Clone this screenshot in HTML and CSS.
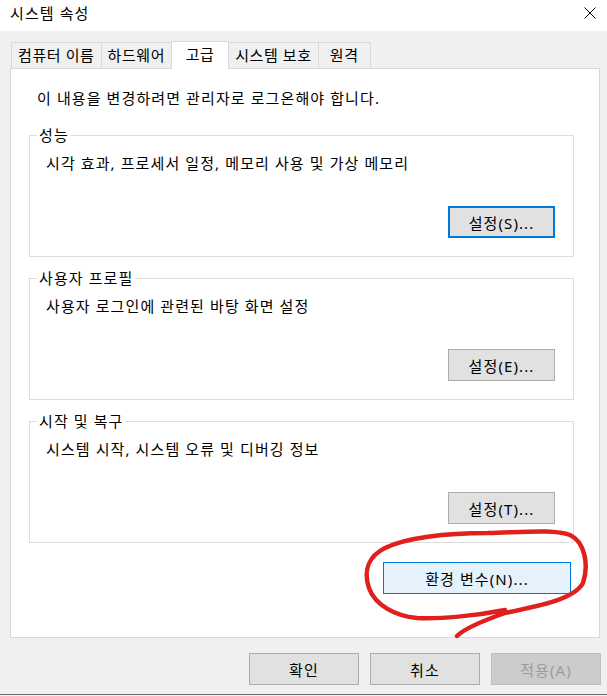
FILE: index.html
```html
<!DOCTYPE html>
<html lang="ko">
<head>
    <meta charset="UTF-8">
    <meta name="viewport" content="width=device-width, initial-scale=1.0">
    <title>시스템 속성</title>
    <link rel="stylesheet" href="styles.css">
</head>
<body>
    <div class="window">
        <div class="titlebar">
            <span class="title">시스템 속성</span>
            <svg class="close" width="12" height="12" viewBox="0 0 12 12">
                <path d="M0.5 0.5 L11.5 11.5 M11.5 0.5 L0.5 11.5" stroke="#000" stroke-width="1" fill="none"/>
            </svg>
        </div>
        <div class="content">
            <div class="tabs">
                <div class="tab">컴퓨터 이름</div>
                <div class="tab">하드웨어</div>
                <div class="tab active">고급</div>
                <div class="tab">시스템 보호</div>
                <div class="tab">원격</div>
            </div>
            <div class="panel">
                <p class="notice">이 내용을 변경하려면 관리자로 로그온해야 합니다.</p>
                <fieldset class="group">
                    <legend>성능</legend>
                    <p class="desc">시각 효과, 프로세서 일정, 메모리 사용 및 가상 메모리</p>
                    <button class="btn btn-default">설정(S)...</button>
                </fieldset>
                <fieldset class="group">
                    <legend>사용자 프로필</legend>
                    <p class="desc">사용자 로그인에 관련된 바탕 화면 설정</p>
                    <button class="btn">설정(E)...</button>
                </fieldset>
                <fieldset class="group">
                    <legend>시작 및 복구</legend>
                    <p class="desc">시스템 시작, 시스템 오류 및 디버깅 정보</p>
                    <button class="btn">설정(T)...</button>
                </fieldset>
                <div class="env-row">
                    <button class="btn btn-hover env-btn">환경 변수(N)...</button>
                </div>
            </div>
            <div class="footer">
                <button class="btn footer-btn">확인</button>
                <button class="btn footer-btn">취소</button>
                <button class="btn footer-btn" disabled>적용(A)</button>
            </div>
        </div>
        <!-- red marker scribble around the env button -->
        <svg class="scribble" width="245" height="120" viewBox="0 0 245 120">
            <path d="M150 90 C120 96, 85 99, 62 98 C40 96, 20 85, 14 68 C8 50, 14 36, 30 28 C50 18, 90 13, 133 13 C170 12, 200 9, 215 15 C230 22, 234 45, 228 63 C220 78, 190 85, 150 93 C130 100, 110 108, 102 116"
                  fill="none" stroke="#e0201c" stroke-width="4.5" stroke-linecap="round" stroke-linejoin="round"/>
        </svg>
    </div>
</body>
</html>
```

FILE: styles.css
```css
body {
    margin: 0;
    background-color: #f0f0f0;
    font-family: "Noto Sans", "Noto Sans CJK KR", sans-serif;
    font-size: 15px;
    letter-spacing: 1.1px;
    color: #000;
}
.window {
    position: relative;
    height: 694px;
    border-bottom: 1px solid #6b6b6b;
    display: flex;
    flex-direction: column;
}
.titlebar {
    height: 31px;
    box-sizing: border-box;
    background-color: #fff;
    display: flex;
    align-items: center;
    justify-content: space-between;
    padding: 0 11px 5px 10px;
}
.title {
    line-height: 20px;
}
.content {
    padding: 10px 6px 0 10px;
}
.tabs {
    display: flex;
    align-items: flex-end;
    height: 27px;
    padding-left: 1px;
}
.tab {
    height: 26px;
    min-width: 53px;
    box-sizing: border-box;
    border: 1px solid #d9d9d9;
    border-bottom: none;
    margin-right: -1px;
    padding: 0 6px;
    line-height: 25px;
    letter-spacing: 0.6px;
    text-align: center;
    white-space: nowrap;
}
.tab.active {
    height: 28px;
    min-width: 58px;
    margin-bottom: -1px;
    background-color: #fff;
    line-height: 24px;
    position: relative;
    z-index: 1;
}
.panel {
    height: 570px;
    box-sizing: border-box;
    margin-right: 1px;
    background-color: #fff;
    border: 1px solid #d9d9d9;
    padding: 19px 25px 0 18px;
}
.notice {
    margin: 0;
    padding-left: 8px;
    line-height: 20px;
}
.group {
    margin: 19px 0 0 0;
    padding: 9px 18px 18px 16px;
    border: 1px solid #dcdcdc;
    min-width: 0;
}
.group + .group {
    margin-top: 13px;
}
.group legend {
    margin-left: -9px;
    padding: 0 2px;
    line-height: 17px;
}
.desc {
    margin: 0;
    line-height: 20px;
}
.btn {
    font-family: inherit;
    font-size: 15px;
    letter-spacing: inherit;
    color: #000;
    background-color: #e1e1e1;
    border: 1px solid #adadad;
    height: 32px;
    padding: 0;
}
.group .btn {
    display: block;
    width: 107px;
    margin: 33px 0 0 auto;
}
.btn-default {
    border: 2px solid #0078d7;
}
.btn-hover {
    background-color: #e5f1fb;
    border-color: #0078d7;
}
.env-row {
    display: flex;
    justify-content: flex-end;
    padding-right: 3px;
    margin-top: 19px;
}
.env-btn {
    width: 188px;
}
.footer {
    display: flex;
    justify-content: flex-end;
    gap: 11px;
    padding-top: 15px;
}
.footer-btn {
    width: 110px;
}
.btn:disabled {
    background-color: #cccccc;
    border-color: #bfbfbf;
    color: #9b9b9b;
}
.scribble {
    position: absolute;
    left: 355px;
    top: 520px;
    pointer-events: none;
}
```
